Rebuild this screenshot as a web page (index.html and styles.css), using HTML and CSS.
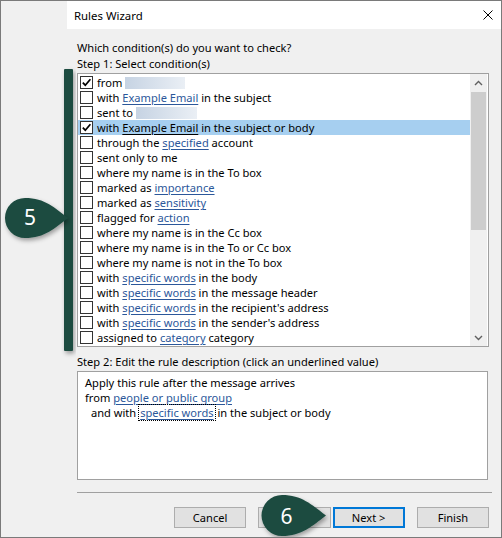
FILE: index.html
```html
<!DOCTYPE html>
<html>
<head>
<meta charset="utf-8">
<title>Rules Wizard</title>
<link rel="stylesheet" href="styles.css">
</head>
<body>
<div class="window">
  <div class="titlebar">
    <span class="title">Rules Wizard</span>
    <svg class="close" width="10" height="10" viewBox="0 0 10 10"><path d="M0.5 0.5L9.5 9.5M9.5 0.5L0.5 9.5" stroke="#000" stroke-width="1" fill="none"/></svg>
  </div>
  <div class="content">
    <div class="label q">Which condition(s) do you want to check?</div>
    <div class="label">Step 1: Select condition(s)</div>
    <div class="listbox">
      <div class="rows">
        <div class="row"><span class="cb checked"><svg viewBox="0 0 11 11" width="11" height="11"><path d="M1.8 5.6L4.3 8.2L9.4 2.2" stroke="#000" stroke-width="1.7" fill="none"/></svg></span><span>from</span><span class="blur b1"></span></div>
        <div class="row"><span class="cb"></span><span>with <a>Example Email</a> in the subject</span></div>
        <div class="row"><span class="cb"></span><span>sent to</span><span class="blur b2"></span></div>
        <div class="row sel"><span class="cb checked"><svg viewBox="0 0 11 11" width="11" height="11"><path d="M1.8 5.6L4.3 8.2L9.4 2.2" stroke="#000" stroke-width="1.7" fill="none"/></svg></span><span>with <a class="dark">Example Email</a> in the subject or body</span></div>
        <div class="row"><span class="cb"></span><span>through the <a>specified</a> account</span></div>
        <div class="row"><span class="cb"></span><span>sent only to me</span></div>
        <div class="row"><span class="cb"></span><span>where my name is in the To box</span></div>
        <div class="row"><span class="cb"></span><span>marked as <a>importance</a></span></div>
        <div class="row"><span class="cb"></span><span>marked as <a>sensitivity</a></span></div>
        <div class="row"><span class="cb"></span><span>flagged for <a>action</a></span></div>
        <div class="row"><span class="cb"></span><span>where my name is in the Cc box</span></div>
        <div class="row"><span class="cb"></span><span>where my name is in the To or Cc box</span></div>
        <div class="row"><span class="cb"></span><span>where my name is not in the To box</span></div>
        <div class="row"><span class="cb"></span><span>with <a>specific words</a> in the body</span></div>
        <div class="row"><span class="cb"></span><span>with <a>specific words</a> in the message header</span></div>
        <div class="row"><span class="cb"></span><span>with <a>specific words</a> in the recipient's address</span></div>
        <div class="row"><span class="cb"></span><span>with <a>specific words</a> in the sender's address</span></div>
        <div class="row"><span class="cb"></span><span>assigned to <a>category</a> category</span></div>
      </div>
      <div class="scrollbar">
        <div class="arrow"><svg width="9" height="6" viewBox="0 0 9 6"><path d="M1 5L4.5 1.5L8 5" stroke="#606060" stroke-width="1.4" fill="none"/></svg></div>
        <div class="thumb"></div>
        <div class="track"></div>
        <div class="arrow"><svg width="9" height="6" viewBox="0 0 9 6"><path d="M1 1L4.5 4.5L8 1" stroke="#606060" stroke-width="1.4" fill="none"/></svg></div>
      </div>
    </div>
    <div class="label step2">Step 2: Edit the rule description (click an underlined value)</div>
    <div class="descbox">
      <div class="dline">Apply this rule after the message arrives</div>
      <div class="dline">from <a>people or public group</a></div>
      <div class="dline indent">and with <a class="focus">specific words</a> in the subject or body</div>
    </div>
    <div class="separator"></div>
    <div class="buttons">
      <div class="btn">Cancel</div>
      <div class="btn back"></div>
      <div class="btn primary">Next &gt;</div>
      <div class="btn">Finish</div>
    </div>
  </div>
  <svg class="overlay" width="502" height="538" viewBox="0 0 502 538">
    <defs>
      <filter id="sh" x="-30%" y="-30%" width="160%" height="160%">
        <feDropShadow dx="1.5" dy="2.5" stdDeviation="2" flood-color="#000" flood-opacity="0.35"/>
      </filter>
    </defs>
    <rect x="64" y="69" width="9" height="282" rx="1" fill="#1c4b40" filter="url(#sh)"/>
    <path d="M25 198 C45 198 55 208 68 218 C55 228 45 238 25 238 A20 20 0 0 1 25 198 Z" fill="#1c4b40" filter="url(#sh)"/>
    <text x="30" y="224.5" class="num" text-anchor="middle">5</text>
    <path d="M282 495 C302 495 312 505 326 515.5 C312 526 302 536 282 536 A20.5 20.5 0 0 1 282 495 Z" fill="#1c4b40" filter="url(#sh)"/>
    <text x="286.5" y="523.5" class="num" text-anchor="middle">6</text>
  </svg>
</div>
</body>
</html>
```
FILE: styles.css
```css
html, body {
  margin: 0;
  padding: 0;
}
body {
  font-family: "Noto Sans", "Open Sans", sans-serif;
  font-size: 11.1px;
  color: #000;
  background: #f0f0f0;
}
.window {
  position: relative;
  width: 502px;
  height: 538px;
  box-sizing: border-box;
  border: 1px solid #7a7a7a;
  background: #f0f0f0;
  overflow: hidden;
}
.titlebar {
  margin-left: 66px;
  height: 28px;
  background: #fff;
  display: flex;
  align-items: center;
  justify-content: space-between;
  padding-left: 7px;
  padding-right: 8px;
}
.title {
  font-size: 11.4px;
  line-height: 15px;
}
.close {
  display: block;
}
.content {
  padding-left: 76px;
}
.label {
  line-height: 15px;
  height: 15px;
  margin-top: 1px;
}
.label.q {
  margin-top: 11px;
}
.label.step2 {
  margin-top: 7px;
}
.listbox {
  margin-top: 2px;
  width: 412px;
  height: 274px;
  box-sizing: border-box;
  border: 1px solid #a0a0a0;
  background: #fff;
  display: flex;
}
.rows {
  flex: 1;
  padding-top: 1px;
}
.row {
  height: 15px;
  line-height: 15px;
  display: flex;
  align-items: center;
  white-space: nowrap;
}
.row.sel {
  background: #a6cff0;
}
.cb {
  width: 13px;
  height: 13px;
  box-sizing: border-box;
  border: 1px solid #333;
  background: #fff;
  margin-left: 2px;
  margin-right: 4px;
  flex: none;
  display: flex;
  align-items: center;
  justify-content: center;
}
.cb svg {
  display: block;
}
a {
  color: #2b579a;
  text-decoration: underline;
  text-underline-offset: 1.5px;
}
a.dark {
  color: #000;
}
.blur {
  display: inline-block;
  height: 12px;
  background: linear-gradient(to right, #c6d3e3, #eaeff5);
}
.blur.b1 {
  width: 60px;
  margin-left: 3px;
}
.blur.b2 {
  width: 61px;
  margin-left: 3px;
}
.scrollbar {
  width: 17px;
  margin-right: 1px;
  background: #f0f0f0;
  display: flex;
  flex-direction: column;
}
.arrow {
  height: 17px;
  display: flex;
  align-items: center;
  justify-content: center;
  flex: none;
}
.arrow svg {
  display: block;
}
.thumb {
  height: 138px;
  margin: 1px 1px 0 1px;
  background: #cdcdcd;
  flex: none;
}
.track {
  flex: 1;
}
.descbox {
  margin-top: 2px;
  width: 411px;
  height: 109px;
  box-sizing: border-box;
  border: 1px solid #a0a0a0;
  background: #fff;
  padding: 3px 0 0 7px;
}
.dline {
  line-height: 15px;
  height: 15px;
  white-space: nowrap;
}
.dline.indent {
  padding-left: 6px;
}
a.focus {
  outline: 1px dotted #000;
  outline-offset: 0px;
  padding: 0 1px;
}
.separator {
  margin-top: 12px;
  width: 415px;
  height: 1px;
  background: #a0a0a0;
}
.buttons {
  margin-top: 14px;
  margin-left: 97px;
  display: flex;
}
.btn {
  width: 73px;
  height: 21px;
  box-sizing: border-box;
  border: 1px solid #adadad;
  background: #e1e1e1;
  display: flex;
  align-items: center;
  justify-content: center;
  line-height: 15px;
  margin-right: 12px;
}
.btn.back {
  margin-right: 2px;
}
.btn.primary {
  border: 2px solid #0078d7;
}
.overlay {
  position: absolute;
  left: -1px;
  top: -1px;
  pointer-events: none;
}
.num {
  font-family: "Noto Sans", "Open Sans", sans-serif;
  font-size: 21px;
  fill: #fff;
}
```
